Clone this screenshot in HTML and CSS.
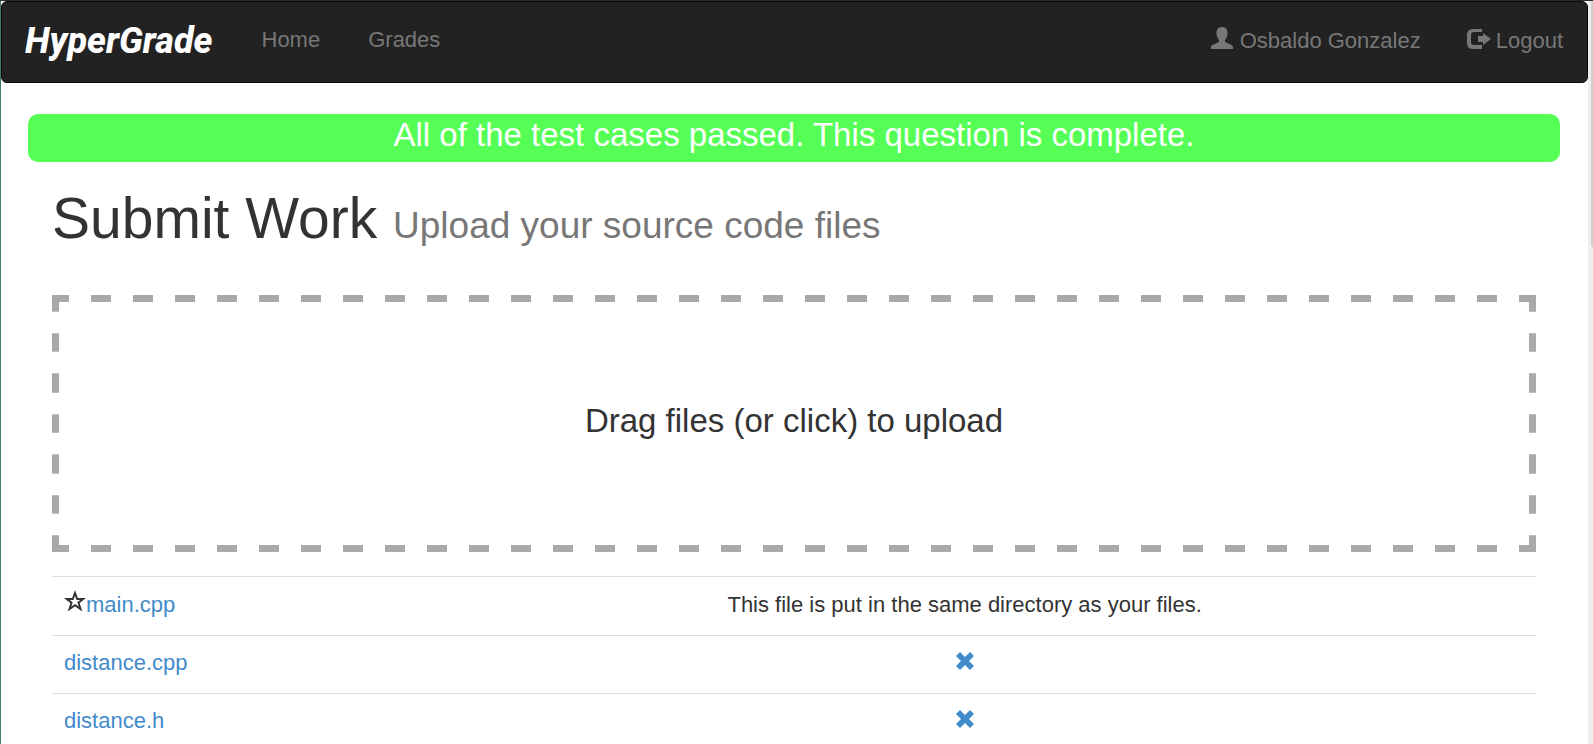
FILE: index.html
```html
<!DOCTYPE html>
<html lang="en">
<head>
<meta charset="utf-8">
<meta name="viewport" content="width=device-width, initial-scale=1">
<title>HyperGrade</title>
<link rel="stylesheet" href="styles.css">
</head>
<body>
<div class="viewport">
  <div class="page">
    <nav class="navbar">
      <a class="brand" href="#">HyperGrade</a>
      <a class="nav-link" href="#">Home</a>
      <a class="nav-link" href="#">Grades</a>
      <div class="nav-right">
        <a class="nav-link nav-user" href="#"><svg class="icon" viewBox="0 0 22 22" aria-hidden="true"><path d="M11 0C14.500 0 16.500 2 16.500 6C16.500 9 15.500 11.500 14 13V14.500C14 15.500 21 17.500 22 19.500V22H0V19.500C1 17.500 8 15.500 8 14.500V13C6.500 11.500 5.500 9 5.500 6C5.500 2 7.500 0 11 0Z"/></svg>Osbaldo Gonzalez</a>
        <a class="nav-link" href="#"><svg class="icon icon-logout" viewBox="0 0 24 22" aria-hidden="true"><path d="M15 2V5H7Q4 5 4 8V15Q4 18 7 18H15V22H6Q0 22 0 16V8Q0 2 6 2ZM16 6L24 12L16 18V15H11V9H16Z"/></svg>Logout</a>
      </div>
    </nav>
    <main class="container">
      <div class="status" role="status">All of the test cases passed. This question is complete.</div>
      <h1 class="title">Submit Work <small class="subtitle">Upload your source code files</small></h1>
      <button class="dropzone" type="button">Drag files (or click) to upload</button>
      <table class="files">
        <tbody>
          <tr>
            <td><svg class="star" viewBox="0 0 22 22" aria-hidden="true"><path d="M11 3L13.200 9H19.200L14.500 12.700L16.500 19L11 15.200L5.500 19L7.500 12.700L2.800 9H8.800Z"/></svg><a href="#">main.cpp</a></td>
            <td class="action">This file is put in the same directory as your files.</td>
          </tr>
          <tr>
            <td><a href="#">distance.cpp</a></td>
            <td class="action"><button class="remove" type="button" aria-label="Remove distance.cpp"><svg class="cross" viewBox="0 0 18 18" aria-hidden="true"><path d="M4 0L9 5L14 0L18 4L13 9L18 14L14 18L9 13L4 18L0 14L5 9L0 4Z"/></svg></button></td>
          </tr>
          <tr>
            <td><a href="#">distance.h</a></td>
            <td class="action"><button class="remove" type="button" aria-label="Remove distance.h"><svg class="cross" viewBox="0 0 18 18" aria-hidden="true"><path d="M4 0L9 5L14 0L18 4L13 9L18 14L14 18L9 13L4 18L0 14L5 9L0 4Z"/></svg></button></td>
          </tr>
        </tbody>
      </table>
    </main>
  </div>
  <div class="scroll-track"><div class="scroll-thumb"></div></div>
</div>
</body>
</html>
```
FILE: styles.css
```css
* {
  box-sizing: border-box;
}

body {
  margin: 0;
  color: #333;
  background: #fff;
  font: 22px/32px "Liberation Sans", Arial, sans-serif;
}

a {
  color: #428bca;
  text-decoration: none;
}

.viewport {
  display: flex;
  height: 100vh;
  overflow: hidden;
  border-top: 1px solid #2b2b2b;
}

.page {
  flex: 1;
  min-width: 0;
  border-left: 1px solid #45766f;
}

.navbar {
  display: flex;
  align-items: flex-start;
  height: 82px;
  padding-top: 22px;
  background: #222;
  border: 1px solid #080808;
  border-radius: 6px;
}

.brand {
  padding: 0 25px 0 23px;
  color: #fff;
  font: italic 800 36px/34px Roboto, sans-serif;
}

.nav-link {
  display: flex;
  align-items: center;
  padding: 0 24px;
  color: #777;
}

.nav-right {
  display: flex;
  margin-left: auto;
  padding-top: 1px;
}

.nav-user {
  padding-right: 22px;
}

.icon {
  width: 22px;
  height: 22px;
  margin: 0 7px 6px 0;
  fill: currentColor;
}

.icon-logout {
  width: 24px;
  margin-right: 5px;
}

.container {
  padding: 31px 52px 0 51px;
}

.status {
  height: 48px;
  margin: 0 -24px;
  border-radius: 10px;
  background: #5f5;
  color: #fff;
  font-size: 33px;
  line-height: 42px;
  text-align: center;
}

.title {
  margin: 24px 0 37px;
  font-size: 57px;
  font-weight: 400;
  line-height: 64px;
}

.subtitle {
  color: #777;
  font-size: 37px;
}

.dropzone {
  display: block;
  width: 100%;
  height: 257px;
  padding: 0 0 6px;
  color: inherit;
  background: none;
  border: 7px solid #a9a9a9;
  border-image: url("data:image/svg+xml,%3Csvg xmlns='http://www.w3.org/2000/svg' width='56' height='56'%3E%3Cpath fill='%23a9a9a9' d='M0 0H17V7H7V17H0ZM39 0H56V17H49V7H39ZM0 39H7V49H17V56H0ZM49 39H56V56H39V49H49Z'/%3E%3C/svg%3E") 7 round;
  font: inherit;
  font-size: 33px;
  cursor: pointer;
}

.files {
  width: 100%;
  margin-top: 24px;
  border-collapse: collapse;
  table-layout: fixed;
}

.files td {
  padding: 11px 12px 14px;
  border-top: 1px solid #ddd;
  vertical-align: top;
}

.files tr:first-child td {
  padding-top: 12px;
}

.files td:first-child {
  width: 23%;
}

.files .action {
  text-align: center;
}

.star {
  width: 22px;
  height: 22px;
  fill: none;
  stroke: #333;
  stroke-width: 2;
}

.remove {
  padding: 0;
  color: #428bca;
  background: none;
  border: 0;
  font: inherit;
  cursor: pointer;
}

.cross {
  width: 18px;
  height: 18px;
  fill: currentColor;
}

.scroll-track {
  width: 5px;
  padding-left: 3px;
  background: #ededec;
}

.scroll-thumb {
  height: 33vh;
  background: #cfcfce;
  border-radius: 2px 0 0 2px;
}
```
